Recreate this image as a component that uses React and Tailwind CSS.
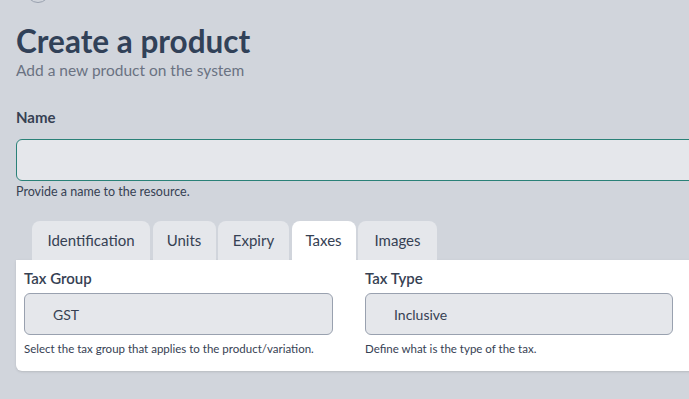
import React, { useState } from "react";

const TABS = [
  { name: "Identification", w: "w-[118px]" },
  { name: "Units", w: "w-[63px]" },
  { name: "Expiry", w: "w-[71px]" },
  { name: "Taxes", w: "w-[64px]" },
  { name: "Images", w: "w-[79px]" },
];

function Field({ label, value, help }) {
  return (
    <div className="flex flex-col">
      <label className="text-[15px] font-semibold text-gray-700 leading-5 mb-[5px]">
        {label}
      </label>
      <div className="h-[42px] rounded-md border border-gray-400 bg-gray-200 flex items-center pl-[28px] text-[14px] text-gray-700">
        {value}
      </div>
      <p className="text-[11.5px] text-gray-700 mt-[6px] leading-4">{help}</p>
    </div>
  );
}

export default function App() {
  const [active, setActive] = useState("Taxes");

  return (
    <div
      className="flow-root min-h-[399px] w-[689px] overflow-hidden bg-gray-300 pl-4"
      style={{ fontFamily: "Lato, 'Noto Sans', sans-serif" }}
    >
      {/* back button, scrolled off the top */}
      <div className="ml-[10px] -mt-[21px] h-6 w-6 rounded-full border border-gray-400" />

      {/* Header */}
      <div className="mt-[20px]">
        <h1 className="text-[31.5px] font-bold text-slate-700 leading-9">Create a product</h1>
        <p className="text-[15.5px] text-gray-500 leading-5 mt-[1px]">Add a new product on the system</p>
      </div>

      {/* Name */}
      <div className="mt-[27px] w-[720px]">
        <label className="block text-[15px] font-bold text-gray-700 leading-5">Name</label>
        <input
          type="text"
          className="mt-[12px] block h-[42px] w-full rounded-md border border-[#2a8178] bg-gray-200 outline-none"
        />
        <p className="text-[12.5px] text-gray-700 mt-[3px] leading-4">Provide a name to the resource.</p>
      </div>

      {/* Tabs */}
      <div className="mt-[21px] w-[720px]">
        <div className="flex gap-[2.5px] pl-4">
          {TABS.map((tab) => (
            <button
              key={tab.name}
              onClick={() => setActive(tab.name)}
              className={`h-[39px] ${tab.w} rounded-t-lg text-[15px] text-gray-700 ${
                active === tab.name ? "bg-white" : "bg-gray-200"
              }`}
            >
              {tab.name}
            </button>
          ))}
        </div>
        <div className="bg-white rounded-b-md shadow-sm px-2 pt-[8px] pb-[14px]">
          <div className="grid grid-cols-[309px_308px] gap-x-8">
            <Field
              label="Tax Group"
              value="GST"
              help="Select the tax group that applies to the product/variation."
            />
            <Field label="Tax Type" value="Inclusive" help="Define what is the type of the tax." />
          </div>
        </div>
      </div>
    </div>
  );
}
